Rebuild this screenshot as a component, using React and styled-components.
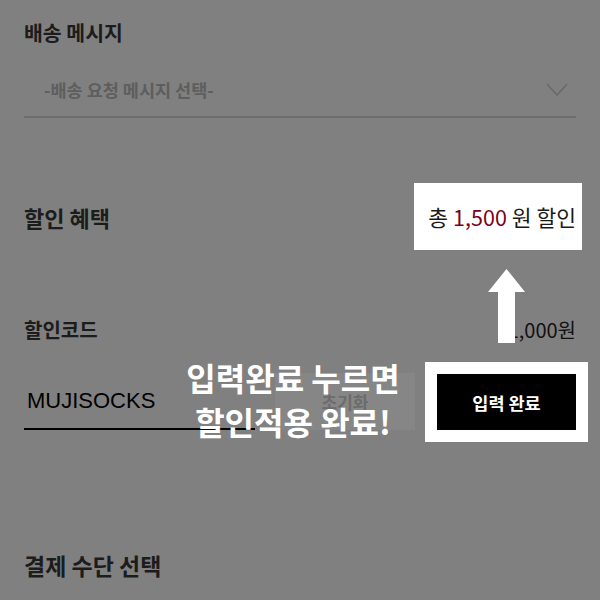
import React from 'react'
import styled, { createGlobalStyle } from 'styled-components'

const GlobalStyle = createGlobalStyle`
  body {
    margin: 0;
    background: #808080;
    font-family: "Noto Sans CJK KR", "Noto Sans", sans-serif;
  }
`

const App = () => {
  return (
    <Page>
      <GlobalStyle />
      <Heading size={20.5}>배송 메시지</Heading>
      <Select>
        <span>-배송 요청 메시지 선택-</span>
        <svg width="22" height="14" viewBox="0 0 22 14">
          <path d="M1 1 L11 12 L21 1" fill="none" stroke="#6a6a6a" strokeWidth="1.6" />
        </svg>
      </Select>

      <BenefitRow>
        <Heading size={22}>할인 혜택</Heading>
        <TotalBadge>
          총 <Amount>1,500</Amount> 원 할인
        </TotalBadge>
      </BenefitRow>

      <CodeRow>
        <Heading size={20}>할인코드</Heading>
        <Value>1,000원</Value>
      </CodeRow>

      <InputRow>
        <CodeInput>MUJISOCKS</CodeInput>
        <ResetButton>초기화</ResetButton>
        <ApplyButton>입력 완료</ApplyButton>
      </InputRow>

      <PaymentHeading size={23}>결제 수단 선택</PaymentHeading>

      <Arrow width="37" height="74" viewBox="0 0 37 74">
        <polygon points="18.5,0 37,23 27,23 27,74 10,74 10,23 0,23" fill="#fff" />
      </Arrow>
      <Caption>
        입력완료 누르면
        <br />
        할인적용 완료!
      </Caption>
    </Page>
  )
}

const Page = styled.div`
  position: relative;
  width: 600px;
  height: 600px;
  overflow: hidden;
  box-sizing: border-box;
  padding: 20px 24px 0;
  display: flex;
  flex-direction: column;
`

const Heading = styled.h2`
  margin: 0;
  font-size: ${(p) => p.size}px;
  line-height: 24px;
  font-weight: 700;
  color: #1c1c1c;
`

const Select = styled.div`
  display: flex;
  align-items: center;
  justify-content: space-between;
  padding: 34px 8px 14px 20px;
  border-bottom: 2px solid #6e6e6e;
  font-size: 17.5px;
  line-height: 24px;
  color: #5e5e5e;
  font-weight: 700;
`

const BenefitRow = styled.div`
  display: flex;
  align-items: center;
  justify-content: space-between;
  margin-top: 65px;
  height: 67px;
`

const TotalBadge = styled.div`
  display: flex;
  align-items: center;
  justify-content: flex-end;
  gap: 5px;
  box-sizing: border-box;
  width: 168px;
  height: 67px;
  margin-right: -6px;
  padding-right: 6px;
  background: #fff;
  font-size: 21.5px;
  color: #1a1a1a;
`

const Amount = styled.span`
  color: #7d0019;
`

const CodeRow = styled.div`
  display: flex;
  align-items: center;
  justify-content: space-between;
  margin-top: 68px;
`

const Value = styled.span`
  font-size: 20px;
  line-height: 24px;
  color: #111;
`

const InputRow = styled.div`
  display: flex;
  align-items: stretch;
  margin-top: 31px;
  height: 57px;
`

const CodeInput = styled.div`
  display: flex;
  align-items: center;
  box-sizing: border-box;
  width: 231px;
  padding-left: 3px;
  border-bottom: 2px solid #000;
  font-family: "Liberation Sans", Arial, sans-serif;
  font-size: 22px;
  color: #000;
`

const ResetButton = styled.div`
  display: flex;
  align-items: center;
  justify-content: center;
  width: 140px;
  margin-left: 20px;
  background: #868686;
  color: #6c6c6c;
  font-size: 17px;
  font-weight: 700;
`

const ApplyButton = styled.div`
  display: flex;
  align-items: center;
  justify-content: center;
  width: 139px;
  margin-left: 22px;
  margin-top: 1px;
  background: #000;
  outline: 12px solid #fff;
  color: #fff;
  font-size: 17.5px;
  font-weight: 700;
`

const PaymentHeading = styled(Heading)`
  margin-top: 123px;
`

const Arrow = styled.svg`
  position: absolute;
  left: 488px;
  top: 269px;
`

const Caption = styled.div`
  position: absolute;
  left: 163px;
  top: 355px;
  width: 260px;
  text-align: center;
  font-size: 32px;
  line-height: 44px;
  font-weight: 700;
  color: #fff;
`

export default App
